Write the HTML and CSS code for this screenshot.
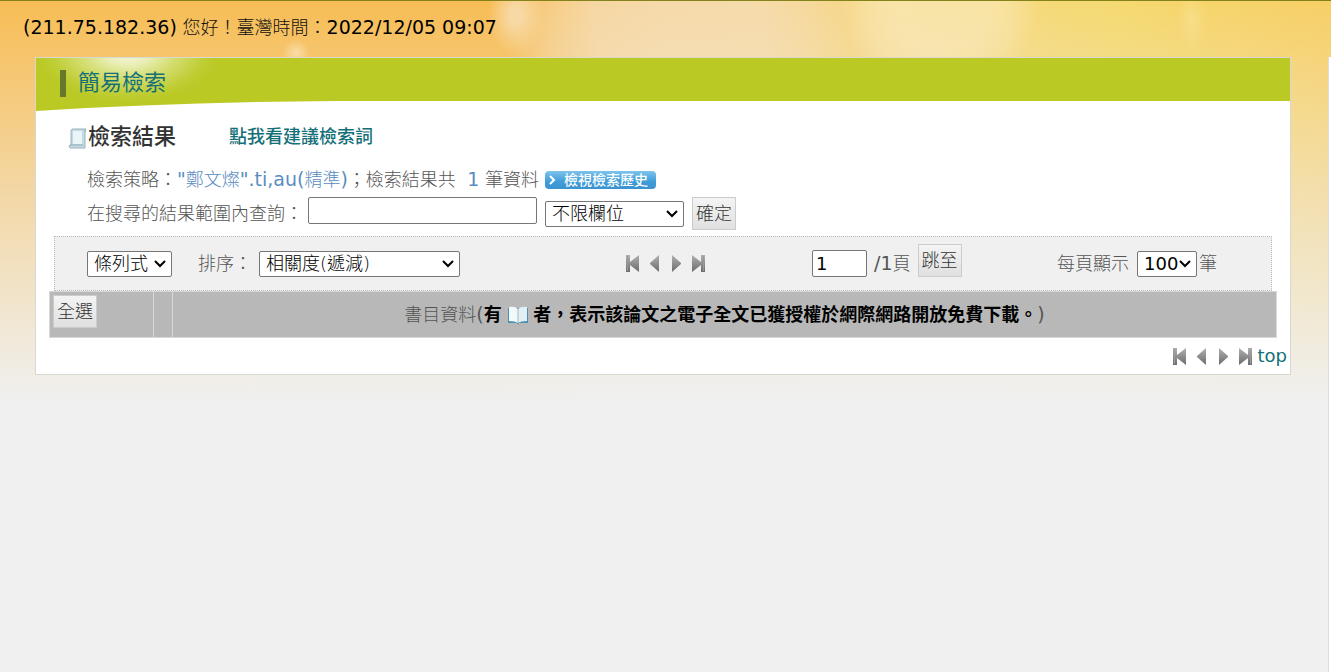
FILE: index.html
```html
<!DOCTYPE html>
<html lang="zh-Hant">
<head>
<meta charset="utf-8">
<title>簡易檢索</title>
<link rel="stylesheet" href="styles.css">
</head>
<body>
<svg class="defs" width="0" height="0" aria-hidden="true">
  <defs>
    <linearGradient id="metal" x1="0" y1="0" x2="0" y2="1">
      <stop offset="0" stop-color="#b0b0b0"/><stop offset="1" stop-color="#6c6c6c"/>
    </linearGradient>
    <symbol id="first" viewBox="0 0 14 17"><path fill="url(#metal)" d="M1 0h4v7L14 0v17L5 10v7H1z"/><path stroke="#999" d="M2.500 1v15"/></symbol>
    <symbol id="prev" viewBox="0 0 10 17"><path fill="url(#metal)" d="M9 0v17L0 9V8z"/></symbol>
    <symbol id="next" viewBox="0 0 10 17"><path fill="url(#metal)" d="M1 0v17l9-8V8z"/></symbol>
    <symbol id="last" viewBox="0 0 14 17"><path fill="url(#metal)" d="M13 0h-4v7L0 0v17l9-7v7h4z"/><path stroke="#999" d="M11.500 1v15"/></symbol>
  </defs>
</svg>
<div class="status"><span class="num">(211.75.182.36)</span> 您好！臺灣時間：<span class="num">2022/12/05 09:07</span></div>
<div class="layout">
  <main class="panel">
    <header class="banner">
      <svg class="swoosh" width="300" height="53" viewBox="0 0 300 53" aria-hidden="true">
        <defs>
          <radialGradient id="glow" gradientUnits="userSpaceOnUse" cx="0" cy="0" r="1" gradientTransform="translate(92 -6) scale(98 54)">
            <stop offset="0" stop-color="#f6f8e0"/><stop offset=".25" stop-color="#e9eeb4"/><stop offset=".65" stop-color="#cfda62" stop-opacity=".7"/><stop offset="1" stop-color="#bac924" stop-opacity="0"/>
          </radialGradient>
        </defs>
        <path fill="#bac924" d="M0 0h300v43Q140 44 0 53z"/>
        <path fill="url(#glow)" d="M0 0h300v43Q140 44 0 53z"/>
      </svg>
      <h1 class="banner-title"><a href="#">簡易檢索</a></h1>
    </header>
    <div class="heading">
      <svg class="scroll" width="20" height="21" viewBox="0 0 20 21" aria-hidden="true">
        <path fill="#c3dbe2" stroke="#9db2b9" d="M4 1h14q-1 1-1 4v15H2q-2-2 0-3h1V4q0-2 1-3z"/>
        <path fill="#eaf5f8" d="M5 3h9v13H5z"/><path stroke="#93acb5" d="M2 17h13"/><path fill="#a4bcc4" d="M16 4q0-3 2-3v3z"/>
      </svg>
      <h2 class="heading-title">檢索結果</h2>
      <a class="suggest" href="#">點我看建議檢索詞</a>
    </div>
    <div class="strategy">
      <span>檢索策略：<span class="term"><span class="num">"</span>鄭文燦<span class="num">".ti,au(</span>精準<span class="num">)</span></span>；檢索結果共&nbsp; <span class="term num">1</span> 筆資料</span>
      <button class="history" type="button"><svg width="7" height="10" viewBox="0 0 7 10" aria-hidden="true"><path fill="none" stroke="#fff" stroke-width="2" d="M1 1l4 4-4 4"/></svg>檢視檢索歷史</button>
    </div>
    <form class="query">
      <label for="kw">在搜尋的結果範圍內查詢：</label>
      <input class="box keyword" id="kw" type="text">
      <select class="pick field" aria-label="欄位"><option>不限欄位</option></select>
      <button class="btn" type="button">確定</button>
    </form>
    <div class="toolbar">
      <div class="group">
        <select class="pick view" aria-label="顯示格式"><option>條列式</option></select>
        <label class="sort-label" for="sort">排序：</label>
        <select class="pick sort" id="sort"><option>相關度(遞減)</option></select>
      </div>
      <nav class="pager" aria-label="分頁">
        <button type="button" aria-label="第一頁"><svg width="14" height="17"><use href="#first"/></svg></button>
        <button type="button" aria-label="上一頁"><svg width="10" height="17"><use href="#prev"/></svg></button>
        <button type="button" aria-label="下一頁"><svg width="10" height="17"><use href="#next"/></svg></button>
        <button type="button" aria-label="最末頁"><svg width="14" height="17"><use href="#last"/></svg></button>
      </nav>
      <div class="group jump">
        <input class="box page" id="page" type="text" value="1">
        <label for="page"><span class="num">/1</span>頁</label>
        <button class="btn" type="button">跳至</button>
      </div>
      <div class="group per-page">
        <label for="size">每頁顯示</label>
        <select class="pick size" id="size"><option>100</option></select>
        <span>筆</span>
      </div>
    </div>
    <table class="results">
      <thead>
        <tr>
          <th class="col-all"><button class="btn" type="button">全選</button></th>
          <th class="col-no"></th>
          <th>書目資料<span class="num">(</span><b>有</b> <svg class="book" width="20" height="19" viewBox="0 0 20 19" aria-hidden="true"><path fill="#4d8fb0" d="M0 2h20v15h-9l-1 2-1-2H0z"/><path fill="#f2f9fb" d="M1 1q6-1 9 2v14q-3-2-9-2z"/><path fill="#e2eff4" d="M19 1q-6-1-9 2v14q3-2 9-2z"/><path stroke="#9db9c4" d="M10 3v14"/></svg> <b>者，表示該論文之電子全文已獲授權於網際網路開放免費下載。</b><span class="num">)</span></th>
        </tr>
      </thead>
    </table>
    <div class="foot">
      <nav class="pager" aria-label="頁尾分頁">
        <button type="button" aria-label="第一頁"><svg width="14" height="17"><use href="#first"/></svg></button>
        <button type="button" aria-label="上一頁"><svg width="10" height="17"><use href="#prev"/></svg></button>
        <button type="button" aria-label="下一頁"><svg width="10" height="17"><use href="#next"/></svg></button>
        <button type="button" aria-label="最末頁"><svg width="14" height="17"><use href="#last"/></svg></button>
      </nav>
      <a class="top" href="#">top</a>
    </div>
  </main>
  <aside class="side"></aside>
</div>
</body>
</html>
```

FILE: styles.css
```css
* { box-sizing: border-box; }
html { background: #f0f0f0; }
body {
  margin: 0;
  min-height: 100vh;
  display: flex;
  flex-direction: column;
  border-top: 1px solid #84821a;
  font: 300 18px/24px "DejaVu Sans", "Noto Sans CJK TC", sans-serif;
  color: #555;
  background:
    radial-gradient(ellipse 28px 40px at 516px 14px, #f8d9a5 0 20%, #f8d9a500 100%),
    radial-gradient(circle 14px at 296px 52px, #f9dda8, #f9dda800),
    radial-gradient(ellipse 14px 30px at 1192px 20px, #fbe49c88, #fbe49c00),
    linear-gradient(to bottom, #f0f0f000 0, #f0e9da99 190px, #f0f0f0 400px),
    radial-gradient(circle 100px at 940px 0, #fbebbd99 0 50%, #fbebbd66 75%, #fbebbd00 100%),
    radial-gradient(circle 170px at 680px 20px, #f6dfbaaa 0 50%, #f6dfba55 80%, #f6dfba00 100%),
    linear-gradient(to right, #f7bd55 0, #f7bd55 38%, #f6cf8a 50%, #f6d987 68%, #f5d970 84%, #f7cf65 100%);
  background-repeat: no-repeat;
}
a { text-decoration: none; color: #147078; }
button, input, select { font: inherit; }
h1, h2 { margin: 0; }
.defs { position: absolute; }

.status { padding: 14px 23px 17px; color: #111; }
.status .num { color: #000; }
.num { font-size: 19px; font-weight: 400; }

.layout { flex: 1; display: flex; align-items: stretch; }
.side { width: 3px; margin-left: 37px; background: #fff; border-left: 1px solid #ddd; }
.panel {
  flex: 1;
  align-self: flex-start;
  margin-left: 35px;
  border: 1px solid #d8d8d0;
  background: #fff;
}

.banner { position: relative; height: 53px; background: linear-gradient(#bac924 0 43px, #fff 43px); }
.swoosh { position: absolute; left: 0; top: 0; }
.banner-title {
  position: relative;
  display: flex;
  align-items: center;
  height: 50px;
  margin-left: 24px;
  font-size: 22px;
  font-weight: 400;
}
.banner-title::before { content: ""; width: 6px; height: 27px; margin-right: 12px; background: #66782a; }

.heading { display: flex; align-items: center; height: 51px; padding-left: 32px; }
.scroll { margin-top: 3px; }
.heading-title { font-size: 22px; font-weight: 500; color: #333; }
.suggest { margin-left: 53px; font-weight: 500; }

.strategy { display: flex; align-items: center; gap: 6px; height: 35px; padding-left: 51px; }
.term { color: #5a8cc0; }
.history {
  display: flex;
  align-items: center;
  gap: 8px;
  height: 18px;
  padding: 0 8px 0 4px;
  border: 0;
  border-radius: 4px;
  background: linear-gradient(#7ec4ec, #3f9cd8 60%, #3b93d0);
  color: #fff;
  font-size: 14px;
  font-weight: 500;
  line-height: 18px;
}

.query { display: flex; align-items: center; gap: 8px; height: 33px; padding-left: 51px; }
.query label { margin-right: -3px; }
.box { border: 1px solid #767676; border-radius: 2px; background: #fff; color: #000; padding: 0 3px; height: 27px; font-weight: 400; }
.keyword { width: 229px; align-self: flex-start; }
.pick {
  appearance: none;
  height: 26px;
  padding: 0 18px 0 6px;
  border: 1px solid #767676;
  border-radius: 2px;
  background: #fff url("data:image/svg+xml,%3Csvg xmlns='http://www.w3.org/2000/svg' width='12' height='8'%3E%3Cpath d='M1 1l5 5 5-5' fill='none' stroke='%23000' stroke-width='2'/%3E%3C/svg%3E") no-repeat right 5px center;
  color: #000;
}
.field { width: 139px; }
.btn {
  height: 33px;
  padding: 0 3px;
  border: 1px solid #ccc;
  background: linear-gradient(#f4f4f4, #e0e0e0);
  color: #333;
}

.toolbar {
  display: grid;
  grid-template-columns: 538fr 187fr 245fr 214fr;
  align-items: center;
  height: 55px;
  margin: 6px 18px 0;
  padding-left: 32px;
  border: 1px dotted #bbb;
  background: #f0f0f0;
}
.group { display: flex; align-items: center; white-space: nowrap; }
.view { width: 85px; }
.sort-label { margin: 0 7px 0 26px; }
.sort { width: 201px; }
.pager { display: flex; align-items: center; gap: 11px; }
.pager button { display: flex; padding: 0; border: 0; background: none; }
.pager svg { display: block; }
.jump { gap: 7px; }
.jump .btn { margin-bottom: 6px; }
.page { width: 55px; }
.size { width: 60px; margin: 0 2px 0 8px; font-weight: 400; }

.results { width: calc(100% - 26px); margin: 0 13px; border-collapse: collapse; table-layout: fixed; }
.results th { height: 46px; padding: 0 3px; border: 1px solid #d8d8d8; background: #b8b8b8; font-weight: 300; }
.results .col-all { width: 104px; text-align: left; vertical-align: top; padding-top: 3px; }
.results .col-no { width: 19px; padding: 0; }
.results b { color: #000; font-weight: 700; }
.book { vertical-align: -4px; }

.foot { display: flex; justify-content: flex-end; align-items: center; gap: 5px; height: 36px; padding-right: 3px; }
.top { font-weight: 400; }
```
